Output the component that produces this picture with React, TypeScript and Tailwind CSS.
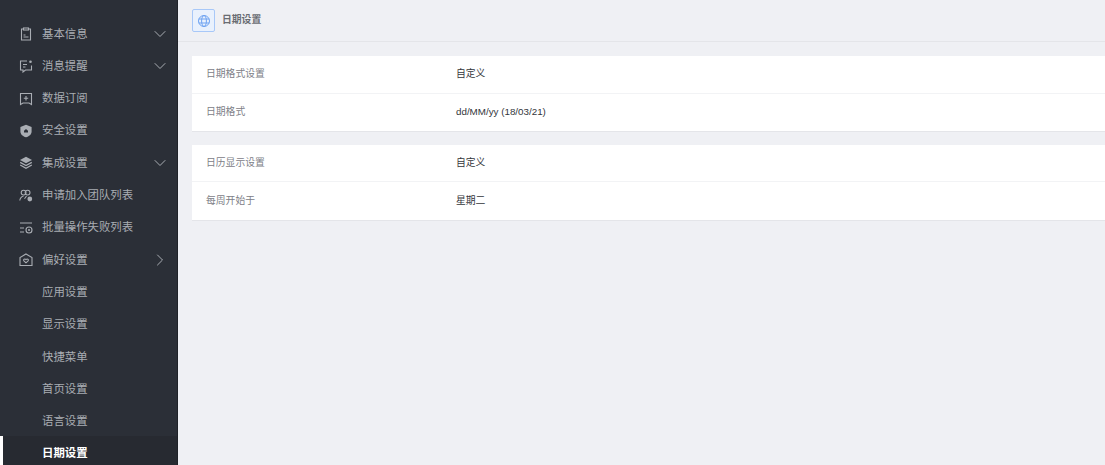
import type { ReactNode } from "react"
import { ChevronDown, ChevronRight } from "lucide-react"

const Ico = ({ children }: { children: ReactNode }) => (
  <svg width="14" height="14" viewBox="0 0 14 14" fill="none" stroke="#a9adb3" strokeWidth="1.1" className="shrink-0">
    {children}
  </svg>
)

const icons: Record<string, ReactNode> = {
  clipboard: (
    <Ico>
      <path d="M4 2H2.5v11h9V2H10" />
      <rect x="4.5" y="1" width="5" height="2" />
      <path d="M4.5 8h2M4.5 10h5" />
    </Ico>
  ),
  message: (
    <Ico>
      <path d="M8 2H1.5v9H4v2l2.5-2h6V6.5" />
      <circle cx="11.5" cy="2.8" r="1.3" fill="#a9adb3" stroke="none" />
      <path d="M4 5.5h4M4 8h2.5" />
    </Ico>
  ),
  bookmark: (
    <Ico>
      <path d="M1.5 1.5h11v11L10 11H4l-2.5 1.5z" />
      <path d="M7 4v4.5M4.8 6.2h4.4" />
    </Ico>
  ),
  shield: (
    <Ico>
      <path d="M7 .8 12.6 3v4.5c0 3-2.6 4.9-5.6 5.8-3-.9-5.6-2.8-5.6-5.8V3z" fill="#a9adb3" stroke="none" />
      <path d="M5 8.5V6.8L7 5l2 1.8v1.7z" fill="#2b2f37" stroke="none" />
    </Ico>
  ),
  layers: (
    <Ico>
      <path d="M7 .8 13 4 7 7.2 1 4z" fill="#a9adb3" stroke="none" />
      <path d="M1.2 6.4 7 9.5l5.8-3.1M1.2 9 7 12.2 12.8 9" strokeWidth="1.3" />
    </Ico>
  ),
  team: (
    <Ico>
      <circle cx="4.6" cy="3.6" r="2.4" />
      <circle cx="8.6" cy="3.6" r="2.4" />
      <path d="M.8 11.5c.3-2.5 1.8-4 3.8-4.5M5.5 9.8 7.5 7" />
      <circle cx="10.8" cy="10" r="2.4" fill="#a9adb3" stroke="none" />
    </Ico>
  ),
  failed: (
    <Ico>
      <path d="M1 2h12M1 7h4M1 11h4" />
      <circle cx="10" cy="9" r="3" />
      <circle cx="10" cy="9" r="1" fill="#a9adb3" stroke="none" />
    </Ico>
  ),
  prefs: (
    <Ico>
      <path d="M7 1 13 4.5V12.5H1V4.5z" />
      <path d="M7 9.8 4.9 7.8c-1-1.2.9-2.6 2.1-1.2 1.2-1.4 3.1 0 2.1 1.2z" />
    </Ico>
  ),
}

const menu = [
  { label: "基本信息", icon: "clipboard", arrow: "down" },
  { label: "消息提醒", icon: "message", arrow: "down" },
  { label: "数据订阅", icon: "bookmark" },
  { label: "安全设置", icon: "shield" },
  { label: "集成设置", icon: "layers", arrow: "down" },
  { label: "申请加入团队列表", icon: "team" },
  { label: "批量操作失败列表", icon: "failed" },
  { label: "偏好设置", icon: "prefs", arrow: "right" },
  { label: "应用设置" },
  { label: "显示设置" },
  { label: "快捷菜单" },
  { label: "首页设置" },
  { label: "语言设置" },
]

const SettingRow = ({ label, value, last }: { label: string; value: string; last?: boolean }) => (
  <div className={`flex h-[37.5px] items-center pl-[14px] text-[9.8px] ${last ? "" : "border-b border-[#f2f3f5]"}`}>
    <span className="w-[250px] text-[#7d8087]">{label}</span>
    <span className="text-[#33363b]">{value}</span>
  </div>
)

export default function App() {
  return (
    <div className="flex h-[465px] w-[1105px] overflow-hidden bg-[#eff0f4] font-['Liberation_Sans','Noto_Sans_CJK_SC',sans-serif]">
      <aside className="flex w-[178px] shrink-0 flex-col border-r border-[#1f2228] bg-[#2b2f37] pt-[18px] text-[11.4px] text-[#a9adb3]">
        {menu.map((item) => (
          <div key={item.label} className="flex h-[32.3px] shrink-0 items-center pr-[7px] pl-[19px]">
            <span className="flex w-[23px] shrink-0">{item.icon && icons[item.icon]}</span>
            <span className="flex-1">{item.label}</span>
            {item.arrow === "down" && <ChevronDown size={20} strokeWidth={1.2} color="#a9adb3" />}
            {item.arrow === "right" && <ChevronRight size={20} strokeWidth={1.2} color="#a9adb3" />}
          </div>
        ))}
        <div className="-mt-[2px] flex h-[34px] shrink-0 items-center border-l-[3px] border-white bg-[#272a31] pt-[2px] pl-[39px] font-bold text-white">
          日期设置
        </div>
      </aside>
      <main className="flex min-w-0 flex-1 flex-col">
        <header className="flex h-[42px] items-center gap-[7px] border-b border-[#e4e5e9] pl-[14px]">
          <span className="flex size-[23px] items-center justify-center rounded-[2px] border border-[#a8c8f8] bg-[#e9f1fd]">
            <svg width="14" height="14" viewBox="0 0 14 14" fill="none" stroke="#6ea3f2" strokeWidth="1">
              <circle cx="7" cy="7" r="5.5" />
              <ellipse cx="7" cy="7" rx="2.4" ry="5.5" />
              <path d="M1.8 5h10.4M1.8 9h10.4" />
            </svg>
          </span>
          <span className="text-[9.8px] font-bold text-[#6a6d73]">日期设置</span>
        </header>
        <div className="flex flex-col gap-[12.6px] pt-[14.4px] pl-[14px]">
          <section className="border-b border-[#e4e5e9] bg-white">
            <SettingRow label="日期格式设置" value="自定义" />
            <SettingRow label="日期格式" value="dd/MM/yy (18/03/21)" last />
          </section>
          <section className="border-b border-[#e4e5e9] bg-white">
            <SettingRow label="日历显示设置" value="自定义" />
            <SettingRow label="每周开始于" value="星期二" last />
          </section>
        </div>
      </main>
    </div>
  )
}
